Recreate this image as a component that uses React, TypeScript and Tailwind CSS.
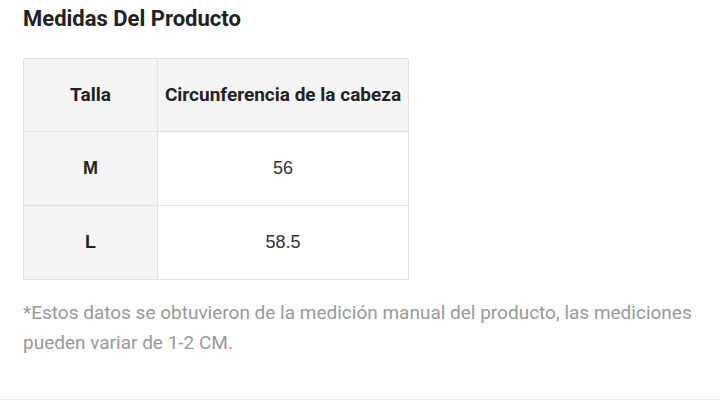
export default function App() {
    const rows = [
        { size: "M", value: "56" },
        { size: "L", value: "58.5" },
    ];

    return (
        <div className="w-[720px] h-[400px] bg-white border-b border-[#ececec] px-[23px] pt-[5px] font-['Roboto',sans-serif]">
            <h2 className="text-[22px] leading-[28px] font-bold text-[#222]">Medidas Del Producto</h2>

            <table className="mt-[25px] w-[386px] border-collapse border border-[#e2e2e2]">
                <thead>
                    <tr className="h-[73px] bg-[#f5f5f5] text-[19px]">
                        <th className="w-[134px] border border-[#e2e2e2] font-bold text-[#222]">Talla</th>
                        <th className="border border-[#e2e2e2] font-bold text-[#222]">Circunferencia de la cabeza</th>
                    </tr>
                </thead>
                <tbody>
                    {rows.map((r) => (
                        <tr key={r.size} className="h-[74px] text-[18px]">
                            <td className="bg-[#f5f5f5] border border-[#e2e2e2] text-center font-bold text-[#222] font-['Liberation_Sans',sans-serif]">
                                {r.size}
                            </td>
                            <td className="border border-[#e2e2e2] text-center text-[#333] font-['Liberation_Sans',sans-serif]">
                                {r.value}
                            </td>
                        </tr>
                    ))}
                </tbody>
            </table>

            <p className="mt-[18px] text-[19px] leading-[30px] text-[#999] w-[672px]">
                *Estos datos se obtuvieron de la medición manual del producto, las mediciones pueden variar de 1-2 CM.
            </p>
        </div>
    );
}
